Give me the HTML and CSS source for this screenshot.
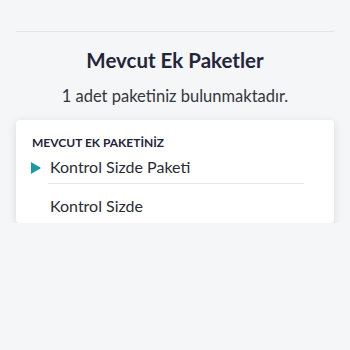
FILE: index.html
```html
<!DOCTYPE html>
<html lang="tr">
<head>
    <meta charset="UTF-8">
    <meta name="viewport" content="width=device-width, initial-scale=1.0">
    <title>Mevcut Ek Paketler</title>
    <link rel="stylesheet" href="styles.css">
</head>
<body>
    <div class="page">
        <hr class="top-line">
        <h2 class="title">Mevcut Ek Paketler</h2>
        <p class="subtitle">1 adet paketiniz bulunmaktadır.</p>
        <div class="card">
            <div class="card-label">MEVCUT EK PAKETİNİZ</div>
            <div class="package active">
                <span class="arrow"></span>
                <span class="package-name">Kontrol Sizde Paketi</span>
            </div>
            <div class="package">
                <span class="package-name">Kontrol Sizde</span>
            </div>
        </div>
    </div>
</body>
</html>
```

FILE: styles.css
```css
body {
    font-family: Lato, "Open Sans", sans-serif;
    margin: 0;
    padding: 0;
    background-color: #f5f6f8;
    color: #23263a;
}
.page {
    padding: 31px 16px 0;
}
.top-line {
    border: none;
    border-top: 1px solid #e4e6ea;
    margin: 0;
}
.title {
    text-align: center;
    font-size: 20.5px;
    font-weight: 700;
    margin: 16px 0 0;
    line-height: 24px;
}
.subtitle {
    text-align: center;
    font-size: 16.5px;
    color: #33363f;
    margin: 14px 0 0;
    line-height: 20px;
}
.card {
    margin-top: 14px;
    background-color: #FFFFFF;
    border-radius: 4px;
    box-shadow: 0 2px 8px rgba(0, 0, 0, 0.12);
    padding: 16px 16px 0;
}
.card-label {
    font-size: 12px;
    font-weight: 700;
    color: #23263a;
    line-height: 14px;
}
.package {
    position: relative;
    margin: 0 14px 0 16px;
    padding: 12px 0 7px 2px;
    font-size: 16px;
    line-height: 20px;
    color: #2a2c36;
}
.package.active {
    border-bottom: 1px solid #e6e7ea;
    padding-top: 7px;
    padding-bottom: 6px;
}
.arrow {
    position: absolute;
    left: -17px;
    top: 12px;
    width: 0;
    height: 0;
    border-top: 6px solid transparent;
    border-bottom: 6px solid transparent;
    border-left: 10px solid #1a9aa6;
}
```
